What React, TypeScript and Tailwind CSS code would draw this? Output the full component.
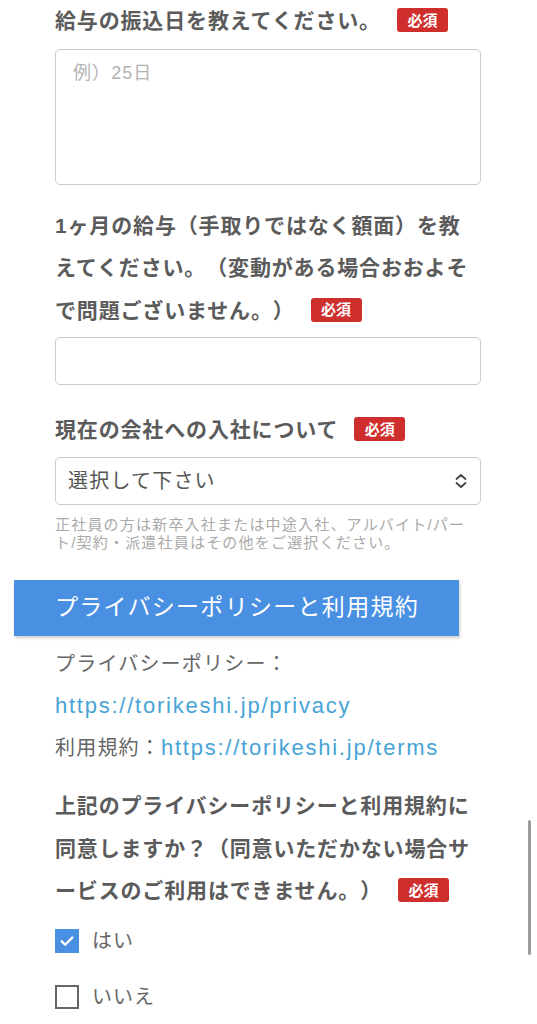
import React from "react"

function Required() {
  return (
    <span className="ml-[16px] inline-flex h-[24px] w-[51px] -translate-y-[2px] items-center justify-center rounded-[3px] bg-[#cf2f2c] align-middle text-[15px] font-bold leading-none tracking-normal text-white">
      必須
    </span>
  )
}

function Label({ children, className = "" }: { children: React.ReactNode; className?: string }) {
  return (
    <div className={`text-[21px] font-bold leading-[42.5px] tracking-[0.04em] text-[#5b5b5b] ${className}`}>
      {children}
    </div>
  )
}

function Check({ checked, label }: { checked: boolean; label: string }) {
  return (
    <label className="flex h-[56px] items-center gap-[13px]">
      {checked ? (
        <span className="flex h-[24px] w-[24px] items-center justify-center bg-[#4a90e2]">
          <svg viewBox="0 0 24 24" className="h-[18px] w-[18px]" fill="none" stroke="white" strokeWidth={3.2} strokeLinecap="round" strokeLinejoin="round">
            <path d="M5 12.5l4.5 4.5L19 7.5" />
          </svg>
        </span>
      ) : (
        <span className="h-[24px] w-[24px] border-[2.5px] border-[#666]" />
      )}
      <span className="text-[20px] tracking-[0.05em] text-[#666]">{label}</span>
    </label>
  )
}

export default function App() {
  return (
    <div className="relative h-[1024px] overflow-hidden bg-white font-['Liberation_Sans','Noto_Sans_CJK_JP',sans-serif] [text-spacing-trim:space-all]">
      <div className="pl-[55px] pr-[56px]">
        {/* 給与の振込日 */}
        <Label>
          給与の振込日を教えてください。
          <Required />
        </Label>
        <div className="mt-[6px] h-[136px] rounded-[5px] border border-[#cccccc] pl-[17px] pt-[12px] text-[18px] leading-[22px] tracking-[0.06em] text-[#b3b3b3]">
          例）25日
        </div>

        {/* 1ヶ月の給与 */}
        <Label className="mt-[20px]">
          1ヶ月の給与（手取りではなく額面）を教
          <br />
          えてください。（変動がある場合おおよそ
          <br />
          で問題ございません。）
          <Required />
        </Label>
        <div className="mt-[5px] h-[48px] rounded-[5px] border border-[#cccccc]" />

        {/* 入社について */}
        <Label className="mt-[24px]">
          現在の会社への入社について
          <Required />
        </Label>
        <div className="mt-[5px] flex h-[48px] items-center justify-between rounded-[5px] border border-[#cccccc] pl-[12px] pr-[11px]">
          <span className="text-[20px] tracking-[0.06em] text-[#555]">選択して下さい</span>
          <svg viewBox="0 0 16 16" className="h-[16px] w-[16px]" fill="none" stroke="#444" strokeWidth={1.8} strokeLinecap="round" strokeLinejoin="round">
            <path d="M3.5 6L8 2l4.5 4" />
            <path d="M3.5 10L8 14l4.5-4" />
          </svg>
        </div>
        <p className="mt-[11px] text-[15px] leading-[18px] tracking-[0.08em] text-[#aaaaaa]">
          正社員の方は新卒入社または中途入社、アルバイト/パー
          <br />
          ト/契約・派遣社員はその他をご選択ください。
        </p>
      </div>

      {/* プライバシーポリシー */}
      <div className="ml-[14px] mt-[28px] flex h-[56px] w-[445px] items-center bg-[#4a90e2] pl-[41px] text-[23px] tracking-[1.3px] text-white shadow-[1px_2px_3px_rgba(0,0,0,0.2)]">
        プライバシーポリシーと利用規約
      </div>

      <div className="pl-[55px] pr-[56px]">
        <div className="mt-[8px] text-[20px] leading-[41.5px] tracking-[0.06em] text-[#666]">
          <div>プライバシーポリシー：</div>
          <div className="text-[22px] tracking-[0.08em] text-[#47a3d6]">https://torikeshi.jp/privacy</div>
          <div>
            利用規約：<span className="text-[22px] tracking-[0.08em] text-[#47a3d6]">https://torikeshi.jp/terms</span>
          </div>
        </div>

        <Label className="mt-[16px]">
          上記のプライバシーポリシーと利用規約に
          <br />
          同意しますか？（同意いただかない場合サ
          <br />
          ービスのご利用はできません。）
          <Required />
        </Label>

        <Check checked label="はい" />
        <Check checked={false} label="いいえ" />
      </div>

      <div className="absolute right-[6px] top-[820px] h-[135px] w-[3px] rounded-full bg-[#9a9a9a]" />
    </div>
  )
}
